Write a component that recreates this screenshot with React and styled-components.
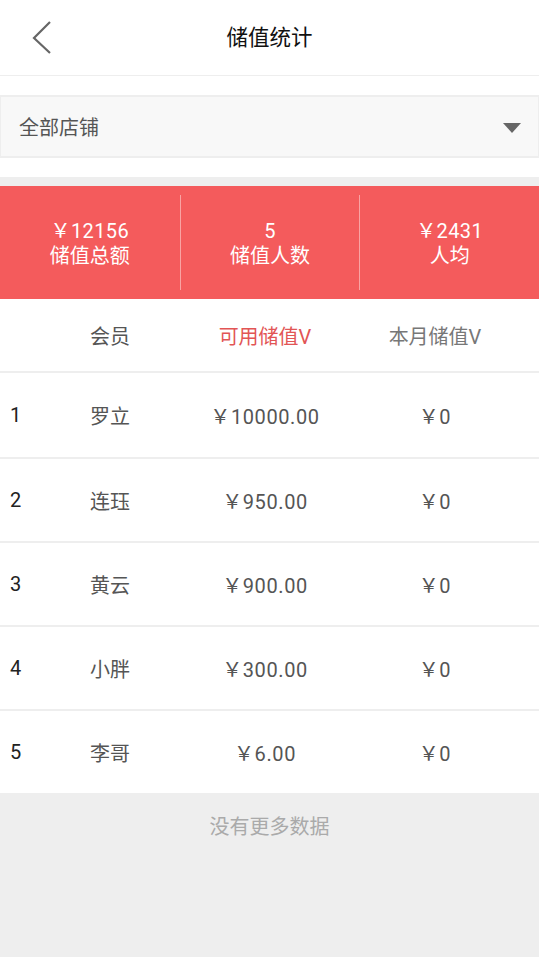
import React from "react";
import styled, { createGlobalStyle } from "styled-components";

const Global = createGlobalStyle`
  html, body { margin: 0; padding: 0; background: #fff; }
  body { font-family: Roboto, "Noto Sans CJK SC", "Noto Sans", sans-serif; }
  * { box-sizing: border-box; }
`;

const Page = styled.div`
  width: 539px;
  min-height: 957px;
  display: flex;
  flex-direction: column;
  background: #fff;
`;

const Header = styled.header`
  height: 76px;
  display: flex;
  align-items: center;
  justify-content: center;
  position: relative;
  border-bottom: 1px solid #eeeeee;
`;

const BackBtn = styled.div`
  position: absolute;
  left: 30px;
  top: 20px;
  width: 24px;
  height: 36px;
`;

const Title = styled.h1`
  margin: 0;
  font-size: 21.5px;
  font-weight: 400;
  color: #111;
  line-height: 1;
`;

const SelectWrap = styled.div`
  padding: 19px 0 19px;
`;

const Select = styled.div`
  height: 63px;
  background: #f8f8f8;
  border-top: 2px solid #eeeeee;
  border-bottom: 2px solid #eeeeee;
  border-left: 1px solid #eeeeee;
  border-right: 1px solid #eeeeee;
  display: flex;
  align-items: center;
  justify-content: space-between;
  padding: 0 17px 0 18px;
  font-size: 20px;
  color: #555;
`;

const Caret = styled.div`
  width: 0;
  height: 0;
  border-left: 9px solid transparent;
  border-right: 9px solid transparent;
  border-top: 10px solid #666;
  margin-top: 2px;
`;

const Band = styled.div`
  height: 9px;
  background: #eeeeee;
`;

const Summary = styled.div`
  height: 113px;
  background: #f45b5c;
  display: grid;
  grid-template-columns: 1fr 1fr 1fr;
  align-items: center;
  padding: 9px 0;
`;

const Stat = styled.div`
  height: 100%;
  display: flex;
  flex-direction: column;
  align-items: center;
  justify-content: center;
  color: #fff;
  font-size: 20px;
  line-height: 25px;
  border-left: ${(p) => (p.$first ? "none" : "1px solid #f9a3a3")};
  padding-top: 2px;
`;

const Num = styled.span`
  letter-spacing: 0.4px;
`;

const Grid = styled.div`
  display: grid;
  grid-template-columns: 40px 120px 190px 150px 1fr;
  padding-left: 10px;
  align-items: center;
`;

const HeadRow = styled(Grid)`
  height: 74px;
  border-bottom: 2px solid #eeeeee;
  font-size: 20px;
`;

const HeadCell = styled.div`
  text-align: center;
  color: ${(p) => p.$color || "#555"};
`;

const Row = styled(Grid)`
  height: 84px;
  border-top: ${(p) => (p.$first ? "none" : "2px solid #eeeeee")};
  font-size: 20px;
  color: #555;
`;

const Index = styled.div`
  color: #222;
  font-size: 20px;
`;

const Cell = styled.div`
  text-align: center;
  white-space: nowrap;
  letter-spacing: ${(p) => (p.$num ? "0.6px" : "0")};
`;

const Footer = styled.div`
  flex: 1;
  background: #eeeeee;
  text-align: center;
  color: #aaa;
  font-size: 20px;
  padding-top: 18px;
`;

const rows = [
  ["1", "罗立", "￥10000.00", "￥0"],
  ["2", "连珏", "￥950.00", "￥0"],
  ["3", "黄云", "￥900.00", "￥0"],
  ["4", "小胖", "￥300.00", "￥0"],
  ["5", "李哥", "￥6.00", "￥0"],
];

export default function App() {
  return (
    <Page>
      <Global />
      <Header>
        <BackBtn>
          <svg width="24" height="36" viewBox="0 0 24 36">
            <path d="M20 2 L4 18 L20 33" fill="none" stroke="#666" strokeWidth="2.2" />
          </svg>
        </BackBtn>
        <Title>储值统计</Title>
      </Header>
      <SelectWrap>
        <Select>
          <span>全部店铺</span>
          <Caret />
        </Select>
      </SelectWrap>
      <Band />
      <Summary>
        <Stat $first>
          <Num>￥12156</Num>
          <span>储值总额</span>
        </Stat>
        <Stat>
          <Num>5</Num>
          <span>储值人数</span>
        </Stat>
        <Stat>
          <Num>￥2431</Num>
          <span>人均</span>
        </Stat>
      </Summary>
      <HeadRow>
        <span />
        <HeadCell>会员</HeadCell>
        <HeadCell $color="#e25555">可用储值V</HeadCell>
        <HeadCell $color="#777">本月储值V</HeadCell>
      </HeadRow>
      {rows.map((r, i) => (
        <Row key={r[0]} $first={i === 0}>
          <Index>{r[0]}</Index>
          <Cell>{r[1]}</Cell>
          <Cell $num>{r[2]}</Cell>
          <Cell $num>{r[3]}</Cell>
        </Row>
      ))}
      <Footer>没有更多数据</Footer>
    </Page>
  );
}
